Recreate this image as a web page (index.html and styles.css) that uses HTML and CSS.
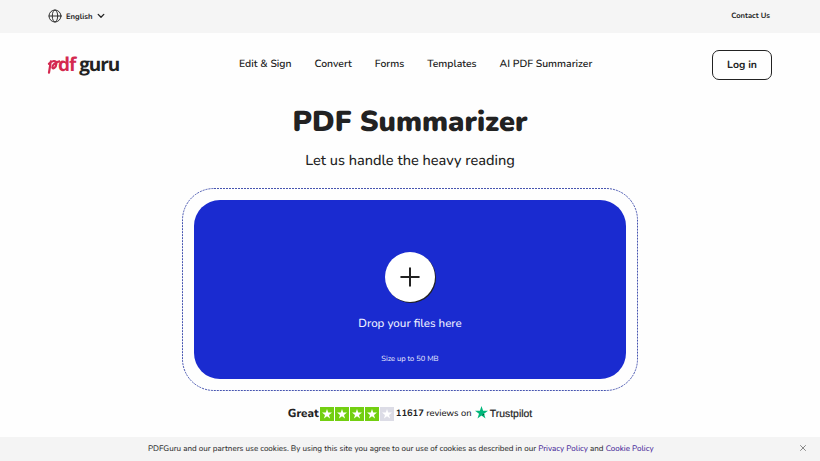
FILE: index.html
```html
<!DOCTYPE html>
<html lang="en">
<head>
<meta charset="utf-8">
<title>PDF Summarizer</title>
<link rel="stylesheet" href="styles.css">
</head>
<body>

<div class="topbar">
	<div class="language">
		<svg class="globe" viewBox="0 0 14 14"><circle cx="7" cy="7" r="6"/><ellipse cx="7" cy="7" rx="2.7" ry="6"/><path d="M1 7h12"/></svg>
		<span class="language-name">English</span>
		<svg class="chevron" viewBox="0 0 8 6"><path d="M1.2 1.4L4 4.2l2.8-2.8"/></svg>
	</div>
	<a class="contact">Contact Us</a>
</div>

<div class="header">
	<div class="logo"><span class="logo-red"><svg class="logo-p" viewBox="0 0 13 20"><path d="M2 17.6L3.8 6.4M2 8.8C4.6 5.6 9.6 4.6 9.4 8.6C9.2 12.6 5.6 14.6 5.3 12.4C5.3 10 8.5 7 12.4 6.4"/></svg>df</span><span class="logo-dark">guru</span></div>
	<div class="nav">
		<a>Edit &amp; Sign</a>
		<a>Convert</a>
		<a>Forms</a>
		<a>Templates</a>
		<a>AI PDF Summarizer</a>
	</div>
	<a class="login">Log in</a>
</div>

<div class="main">
	<h1>PDF Summarizer</h1>
	<p class="subtitle">Let us handle the heavy reading</p>

	<div class="dropframe">
		<svg class="dashes" viewBox="0 0 456 203"><rect x=".5" y=".5" width="455" height="202" rx="31.5"/></svg>
		<div class="dropzone">
			<div class="plus">
				<svg viewBox="0 0 20 20"><path d="M10 1.2v17.6M1.2 10h17.6"/></svg>
			</div>
			<div class="drop-text">Drop your files here</div>
			<div class="drop-size">Size up to 50 MB</div>
		</div>
	</div>

	<div class="reviews">
		<span class="great">Great</span>
		<div class="stars">
			<span class="star"><svg viewBox="0 0 10 10"><path d="M5 0l1.2 3.6H10L7 5.9 8.1 9.6 5 7.3 1.9 9.6 3 5.9 0 3.6h3.8z"/></svg></span>
			<span class="star"><svg viewBox="0 0 10 10"><path d="M5 0l1.2 3.6H10L7 5.9 8.1 9.6 5 7.3 1.9 9.6 3 5.9 0 3.6h3.8z"/></svg></span>
			<span class="star"><svg viewBox="0 0 10 10"><path d="M5 0l1.2 3.6H10L7 5.9 8.1 9.6 5 7.3 1.9 9.6 3 5.9 0 3.6h3.8z"/></svg></span>
			<span class="star"><svg viewBox="0 0 10 10"><path d="M5 0l1.2 3.6H10L7 5.9 8.1 9.6 5 7.3 1.9 9.6 3 5.9 0 3.6h3.8z"/></svg></span>
			<span class="star star-off"><svg viewBox="0 0 10 10"><path d="M5 0l1.2 3.6H10L7 5.9 8.1 9.6 5 7.3 1.9 9.6 3 5.9 0 3.6h3.8z"/></svg></span>
		</div>
		<span class="count"><b>11617</b> reviews on</span>
		<svg class="tp-star" viewBox="0 0 13 13"><path fill="#00b67a" d="M6.5 0l1.6 4.8H13L9 7.7l1.5 4.8-4-3-4 3L4 7.7 0 4.8h4.9z"/><path fill="#005128" d="M9.4 8.9L9 7.7 6.5 9.5z"/></svg>
		<span class="tp-name">Trustpilot</span>
	</div>
</div>

<div class="cookies">
	<p class="cookie-text">PDFGuru and our partners use cookies. By using this site you agree to our use of cookies as described in our <a>Privacy Policy</a> and <a>Cookie Policy</a></p>
	<svg class="close" viewBox="0 0 6 6"><path d="M.5 .5l5 5M5.5 .5l-5 5"/></svg>
</div>

</body>
</html>
```

FILE: styles.css
```css
body {
	margin: 0;
	height: 461px;
	display: flex;
	flex-direction: column;
	overflow: hidden;
	background-color: #fefefe;
	color: #222;
	font-family: Nunito, Lato, "Open Sans", sans-serif;
	white-space: nowrap;
	text-rendering: geometricPrecision;
}
svg {
	display: block;
	fill: none;
	stroke-linecap: round;
	stroke-linejoin: round;
}
.topbar {
	height: 33px;
	box-sizing: border-box;
	padding: 0 50px 1px 48px;
	display: flex;
	align-items: center;
	justify-content: space-between;
	background-color: #f5f5f5;
	font-size: 7.6px;
	font-weight: 700;
}
.language {
	display: flex;
	align-items: center;
}
.globe {
	width: 14px;
	height: 14px;
	margin-right: 4px;
	stroke: #333;
}
.language-name {
	width: 26px;
	font-size: 7.7px;
}
.chevron {
	width: 8px;
	height: 6px;
	margin-left: 5px;
	stroke: #222;
	stroke-width: 1.3;
}
.contact {
	padding-bottom: 2px;
}
.header {
	height: 64px;
	box-sizing: border-box;
	padding: 0 48px 0 47px;
	display: flex;
	align-items: center;
}
.logo {
	width: 192px;
	padding-bottom: 2px;
	display: flex;
	font-family: "Open Sans", sans-serif;
	font-size: 19px;
	line-height: 24px;
	font-weight: 700;
	letter-spacing: -1.1px;
}
.logo-red {
	display: flex;
	color: #d42a50;
	margin-right: 4px;
}
.logo-p {
	width: 13px;
	height: 20px;
	margin-top: 3px;
	margin-right: -2px;
	stroke: #d42a50;
	stroke-width: 2.2;
}
.nav {
	flex: 1;
	display: flex;
	gap: 23px;
	padding-bottom: 4px;
	font-size: 10.4px;
	font-weight: 600;
}
.login {
	width: 60px;
	height: 30px;
	box-sizing: border-box;
	border: 1.5px solid #222;
	border-radius: 7px;
	line-height: 28px;
	text-align: center;
	font-size: 10.5px;
	font-weight: 700;
}
.main {
	flex: 1;
	display: flex;
	flex-direction: column;
	align-items: center;
}
h1 {
	margin: 8px 0 0;
	font-size: 28.9px;
	line-height: 36px;
	font-weight: 900;
}
.subtitle {
	margin: 10px 0 0;
	font-size: 14.5px;
	line-height: 20px;
	font-weight: 500;
}
.dropframe {
	position: relative;
	width: 456px;
	height: 203px;
	box-sizing: border-box;
	margin-top: 17px;
	padding: 12px;
}
.dashes {
	position: absolute;
	top: 0;
	left: 0;
	width: 456px;
	height: 203px;
	stroke: #4755b0;
	stroke-linecap: butt;
	stroke-dasharray: 2 1;
}
.dropzone {
	height: 179px;
	display: flex;
	flex-direction: column;
	align-items: center;
	border-radius: 26px;
	background-color: #1a2bd0;
	color: #eef0ff;
}
.plus {
	width: 50px;
	height: 50px;
	margin-top: 52px;
	display: flex;
	align-items: center;
	justify-content: center;
	border-radius: 50%;
	background-color: #fff;
	box-shadow: 1px 1px 0 #222;
}
.plus svg {
	width: 20px;
	height: 20px;
	stroke: #222;
	stroke-width: 2;
}
.drop-text {
	margin-top: 14px;
	font-size: 11.6px;
	line-height: 17px;
	font-weight: 500;
}
.drop-size {
	margin-top: 20px;
	font-size: 7.5px;
	line-height: 12px;
}
.reviews {
	height: 16px;
	margin-top: 15px;
	display: flex;
	align-items: center;
}
.great {
	width: 32px;
	font-size: 11.6px;
	font-weight: 800;
}
.stars {
	display: flex;
	gap: 1px;
}
.star {
	width: 14px;
	height: 14px;
	display: flex;
	align-items: center;
	justify-content: center;
	background-color: #73cf11;
}
.star-off {
	background-color: #dcdce6;
}
.star svg {
	width: 10px;
	height: 10px;
	fill: #fff;
}
.count {
	width: 76px;
	margin-left: 2px;
	font-size: 9.3px;
	font-weight: 500;
}
.tp-star {
	width: 13px;
	height: 13px;
	margin: 0 2px 4px 3px;
}
.tp-name {
	font-family: "Liberation Sans", Arial, sans-serif;
	font-size: 10.4px;
	padding-top: 1px;
	-webkit-text-stroke: .2px #222;
}
.cookies {
	height: 24px;
	padding: 0 14px 0 148px;
	display: flex;
	align-items: center;
	justify-content: space-between;
	background-color: #f4f4f4;
}
.cookie-text {
	margin: 0;
	padding-bottom: 1px;
	font-size: 8px;
	font-weight: 500;
	color: #333;
}
.cookie-text a {
	color: #4b2d9b;
}
.close {
	width: 6px;
	height: 6px;
	margin-bottom: 2px;
	stroke: #888;
}
```
